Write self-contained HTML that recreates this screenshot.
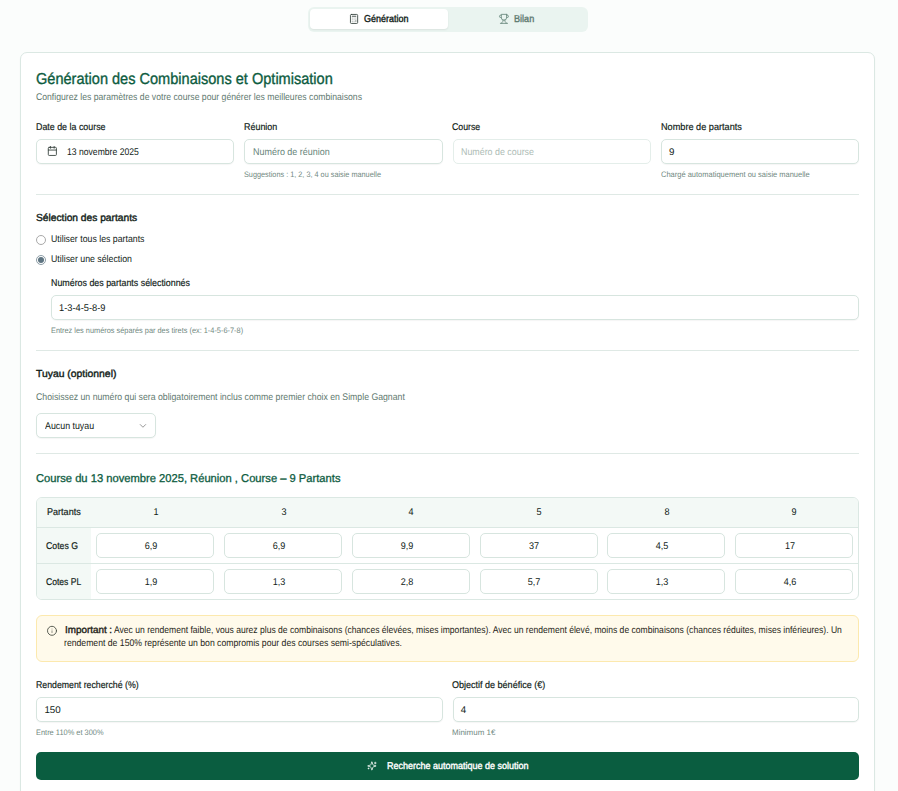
<!DOCTYPE html>
<html lang="fr">
<head>
<meta charset="utf-8">
<title>Génération</title>
<style>
*{box-sizing:border-box;margin:0;padding:0}
html,body{width:898px;height:791px;overflow:hidden;background:#fbfdfc;}
body{text-rendering:geometricPrecision;font-family:"Liberation Sans",sans-serif;color:#111c17;position:relative;font-size:9px;}
.abs{position:absolute}
.t{position:absolute;white-space:nowrap;line-height:1;transform-origin:0 50%;display:inline-block}
.lbl{-webkit-text-stroke:0.18px currentColor}
.med{-webkit-text-stroke:0.3px currentColor}
.sb{-webkit-text-stroke:0.38px currentColor}
.sbt{-webkit-text-stroke:0.35px currentColor}
.tabs{left:308px;top:7px;width:280px;height:25px;background:#eaf4f0;border-radius:6px}
.tab-on{left:310px;top:9px;width:138px;height:20px;background:#fff;border-radius:4px;box-shadow:0 1px 2px rgba(0,0,0,.07)}
.card{left:20px;top:52px;width:855px;height:760px;background:#fff;border:1px solid #dbe8e3;border-radius:7px;box-shadow:0 1px 2px rgba(0,0,0,.04)}
/*i*/.inp{position:absolute;height:25px;background:#fff;border:1px solid #d7e5df;border-radius:5px;box-shadow:0 1px 1px rgba(0,0,0,.04)}
.hr{position:absolute;left:36px;width:823px;height:1px;background:#dfe9e5}
.radio{position:absolute;width:10px;height:10px;border:1px solid #a9a9a9;border-radius:50%;background:#fff}
.radio.on{border-color:#8d9da6}
.radio.on::after{content:"";position:absolute;left:1px;top:1px;width:6px;height:6px;border-radius:50%;background:#5e7481}
.table{left:36px;top:497px;width:823px;height:103px;border:1px solid #dbe8e3;border-radius:6px;background:#fff;overflow:hidden}
.cell{position:absolute;height:25px;width:118px;background:#fff;border:1px solid #d7e5df;border-radius:5px}
.c{position:absolute;white-space:nowrap;line-height:1;transform:translateX(-50%) scaleX(.93);font-size:9.75px;color:#111c17}
.alert{left:36px;top:615px;width:823px;height:47px;background:#fffaeb;border:1px solid #fce9ae;border-radius:6px}
.btn{left:36px;top:752px;width:823px;height:28px;background:#0a5d40;border-radius:5px}
#tab1{left:364.30px;top:14.50px;font-size:10px;font-weight:400;color:#111c17;transform:scaleX(0.8973)}
#tab2{left:513.80px;top:14.50px;font-size:10px;font-weight:400;color:#5f7a70;transform:scaleX(0.9079)}
#title{left:36.10px;top:71.60px;font-size:15.8px;font-weight:400;color:#0d5c3f;transform:scaleX(0.9210)}
#sub{left:36.10px;top:92.62px;font-size:9.75px;font-weight:400;color:#5f7a70;transform:scaleX(0.8872)}
#l1{left:35.70px;top:122.62px;font-size:9.75px;font-weight:400;color:#111c17;transform:scaleX(0.9094)}
#l2{left:244.40px;top:122.62px;font-size:9.75px;font-weight:400;color:#111c17;transform:scaleX(0.9166)}
#l3{left:452.40px;top:122.62px;font-size:9.75px;font-weight:400;color:#111c17;transform:scaleX(0.8970)}
#l4{left:660.90px;top:122.62px;font-size:9.75px;font-weight:400;color:#111c17;transform:scaleX(0.9388)}
#date{left:66.90px;top:147.62px;font-size:9.75px;font-weight:400;color:#111c17;transform:scaleX(0.8830)}
#ph2{left:252.70px;top:147.62px;font-size:9.75px;font-weight:400;color:#68857a;transform:scaleX(0.9189)}
#ph3{left:460.50px;top:147.62px;font-size:9.75px;font-weight:400;color:#adbcb6;transform:scaleX(0.9100)}
#v4{left:669.00px;top:147.62px;font-size:9.75px;font-weight:400;color:#111c17;transform:scaleX(1.0000)}
#h2{left:244.40px;top:170.55px;font-size:7.9px;font-weight:400;color:#71897f;transform:scaleX(0.9240)}
#h4{left:660.90px;top:170.55px;font-size:7.9px;font-weight:400;color:#71897f;transform:scaleX(0.9496)}
#s1{left:35.70px;top:214.40px;font-size:10.2px;font-weight:400;color:#111c17;transform:scaleX(1.0029)}
#r1{left:50.70px;top:234.62px;font-size:9.75px;font-weight:400;color:#111c17;transform:scaleX(0.8986)}
#r2{left:50.70px;top:254.62px;font-size:9.75px;font-weight:400;color:#111c17;transform:scaleX(0.9003)}
#l5{left:51.20px;top:278.62px;font-size:9.75px;font-weight:400;color:#111c17;transform:scaleX(0.9094)}
#v5{left:59.40px;top:303.62px;font-size:9.75px;font-weight:400;color:#111c17;transform:scaleX(0.9512)}
#h5{left:51.20px;top:326.55px;font-size:7.9px;font-weight:400;color:#71897f;transform:scaleX(0.9339)}
#s2{left:35.70px;top:370.40px;font-size:10.2px;font-weight:400;color:#111c17;transform:scaleX(1.0189)}
#d2{left:35.70px;top:392.62px;font-size:9.75px;font-weight:400;color:#5f7a70;transform:scaleX(0.8931)}
#sel{left:44.50px;top:421.62px;font-size:9.75px;font-weight:400;color:#111c17;transform:scaleX(0.9056)}
#s3{left:35.70px;top:474.30px;font-size:11.4px;font-weight:400;color:#0d5c3f;transform:scaleX(0.9814)}
#th0{left:46.90px;top:507.62px;font-size:9.75px;font-weight:400;color:#111c17;transform:scaleX(0.9281)}
#th1{left:46.40px;top:541.62px;font-size:9.75px;font-weight:400;color:#111c17;transform:scaleX(0.8933)}
#th2{left:46.40px;top:577.62px;font-size:9.75px;font-weight:400;color:#111c17;transform:scaleX(0.8776)}
#a1b{left:64.70px;top:625.62px;font-size:9.75px;font-weight:400;color:#1f1f18;transform:scaleX(1.0105)}
#a1{left:113.60px;top:625.62px;font-size:9.75px;font-weight:400;color:#1f1f18;transform:scaleX(0.8782)}
#a2{left:64.30px;top:638.62px;font-size:9.75px;font-weight:400;color:#1f1f18;transform:scaleX(0.8882)}
#l6{left:35.70px;top:680.62px;font-size:9.75px;font-weight:400;color:#111c17;transform:scaleX(0.8973)}
#l7{left:452.30px;top:680.62px;font-size:9.75px;font-weight:400;color:#111c17;transform:scaleX(0.9245)}
#v6{left:44.40px;top:705.62px;font-size:9.75px;font-weight:400;color:#111c17;transform:scaleX(1.0000)}
#v7{left:460.70px;top:705.62px;font-size:9.75px;font-weight:400;color:#111c17;transform:scaleX(1.0000)}
#h6{left:35.70px;top:728.55px;font-size:7.9px;font-weight:400;color:#71897f;transform:scaleX(0.9415)}
#h7{left:452.30px;top:728.55px;font-size:7.9px;font-weight:400;color:#71897f;transform:scaleX(1.0097)}
#bt{left:387.20px;top:761.62px;font-size:9.75px;font-weight:400;color:#fff;transform:scaleX(0.9224)}
</style>
</head>
<body>

<!-- Tabs -->
<div class="abs tabs"></div>
<div class="abs tab-on"></div>

<!-- Card -->
<div class="abs card"></div>

<!-- Row 1 inputs -->
<div class="inp" style="left:36px;top:139px;width:198px"></div>
<div class="inp" style="left:244px;top:139px;width:199px"></div>
<div class="inp" style="left:453px;top:139px;width:198px;border-color:#e4eeea;box-shadow:none"></div>
<div class="inp" style="left:661px;top:139px;width:198px"></div>

<div class="hr" style="top:194px"></div>

<!-- Sélection -->
<div class="radio" style="left:36px;top:235px"></div>
<div class="radio on" style="left:36px;top:255px"></div>
<div class="inp" style="left:51px;top:295px;width:808px"></div>

<div class="hr" style="top:350px"></div>

<!-- Tuyau -->
<div class="inp" style="left:36px;top:413px;width:120px"></div>

<div class="hr" style="top:453px"></div>

<!-- Course table -->
<div class="abs table">
  <div class="abs" style="left:0;top:0;width:823px;height:30px;background:#f3f9f6"></div>
  <div class="abs" style="left:0;top:30px;width:54px;height:73px;background:#f3f9f6"></div>
  <div class="abs" style="left:0;top:29px;width:823px;height:1px;background:#dbe8e3"></div>
  <div class="abs" style="left:0;top:65px;width:823px;height:1px;background:#dbe8e3"></div>
</div>

<div class="cell" style="left:96px;top:533px"></div>
<div class="cell" style="left:224px;top:533px"></div>
<div class="cell" style="left:352px;top:533px"></div>
<div class="cell" style="left:480px;top:533px"></div>
<div class="cell" style="left:607px;top:533px"></div>
<div class="cell" style="left:735px;top:533px"></div>
<div class="cell" style="left:96px;top:569px"></div>
<div class="cell" style="left:224px;top:569px"></div>
<div class="cell" style="left:352px;top:569px"></div>
<div class="cell" style="left:480px;top:569px"></div>
<div class="cell" style="left:607px;top:569px"></div>
<div class="cell" style="left:735px;top:569px"></div>

<!-- Alert -->
<div class="abs alert"></div>

<!-- Bottom row -->
<div class="inp" style="left:36px;top:697px;width:407px"></div>
<div class="inp" style="left:453px;top:697px;width:406px"></div>

<!-- Button -->
<div class="abs btn"></div>

<svg class="abs" style="left:0;top:0" width="898" height="791" viewBox="0 0 898 791" fill="none" stroke-width="2" stroke-linecap="round" stroke-linejoin="round">
<g transform="translate(348.65 13.55) scale(0.45)" stroke="#3d4a45" opacity="1"><rect width="16" height="20" x="4" y="2" rx="2"/><line x1="8" x2="16" y1="6" y2="6"/><g stroke="#8d9792"><line x1="16" x2="16" y1="14" y2="18"/><path d="M16 10h.01"/><path d="M12 10h.01"/><path d="M8 10h.01"/><path d="M12 14h.01"/><path d="M8 14h.01"/><path d="M12 18h.01"/><path d="M8 18h.01"/></g></g>
<g transform="translate(498.55 13.45) scale(0.45)" stroke="#6d8c81" opacity="1"><path d="M6 9H4.500a2.500 2.500 0 0 1 0-5H6"/><path d="M18 9h1.500a2.500 2.500 0 0 0 0-5H18"/><path d="M4 22h16"/><path d="M10 14.660V17c0 .55-.47.98-.97 1.210C7.850 18.750 7 20.240 7 22"/><path d="M14 14.660V17c0 .55.47.98.97 1.210C16.150 18.750 17 20.240 17 22"/><path d="M18 2H6v7a6 6 0 0 0 12 0V2Z"/></g>
<g transform="translate(46.95 145.55) scale(0.45)" stroke="#3a4541" opacity="1"><path d="M8 2v4"/><path d="M16 2v4"/><rect width="18" height="18" x="3" y="4" rx="2"/><path d="M3 10h18"/></g>
<g transform="translate(137.55 420.5) scale(0.45)" stroke="#555" opacity="0.68"><path d="m6 9 6 6 6-6"/></g>
<g transform="translate(46.6 625.4) scale(0.45)" stroke="#4a4f45" opacity="1"><circle cx="12" cy="12" r="10"/><g stroke="#84847a"><path d="M12 16v-4"/><path d="M12 8h.01"/></g></g>
<g transform="translate(366.86 760.92) scale(0.42)" stroke="#e9f3ee" opacity="1"><path d="M9.937 15.500A2 2 0 0 0 8.500 14.063l-6.135-1.582a.5.5 0 0 1 0-.962L8.500 9.936A2 2 0 0 0 9.937 8.500l1.582-6.135a.5.5 0 0 1 .963 0L14.063 8.500A2 2 0 0 0 15.500 9.937l6.135 1.581a.5.5 0 0 1 0 .964L15.500 14.063a2 2 0 0 0-1.437 1.437l-1.582 6.135a.5.5 0 0 1-.963 0z"/><path d="M20 3v4"/><path d="M22 5h-4"/><path d="M4 17v2"/><path d="M5 18H3"/></g>
</svg>

<span class="t sb" id="tab1">Génération</span>
<span class="t sb" id="tab2">Bilan</span>
<span class="t sbt" id="title">Génération des Combinaisons et Optimisation</span>
<span class="t " id="sub">Configurez les paramètres de votre course pour générer les meilleures combinaisons</span>
<span class="t lbl" id="l1">Date de la course</span>
<span class="t lbl" id="l2">Réunion</span>
<span class="t lbl" id="l3">Course</span>
<span class="t lbl" id="l4">Nombre de partants</span>
<span class="t " id="date">13 novembre 2025</span>
<span class="t " id="ph2">Numéro de réunion</span>
<span class="t " id="ph3">Numéro de course</span>
<span class="t " id="v4">9</span>
<span class="t " id="h2">Suggestions : 1, 2, 3, 4 ou saisie manuelle</span>
<span class="t " id="h4">Chargé automatiquement ou saisie manuelle</span>
<span class="t sb" id="s1">Sélection des partants</span>
<span class="t " id="r1">Utiliser tous les partants</span>
<span class="t " id="r2">Utiliser une sélection</span>
<span class="t lbl" id="l5">Numéros des partants sélectionnés</span>
<span class="t " id="v5">1-3-4-5-8-9</span>
<span class="t " id="h5">Entrez les numéros séparés par des tirets (ex: 1-4-5-6-7-8)</span>
<span class="t sb" id="s2">Tuyau (optionnel)</span>
<span class="t " id="d2">Choisissez un numéro qui sera obligatoirement inclus comme premier choix en Simple Gagnant</span>
<span class="t " id="sel">Aucun tuyau</span>
<span class="t med" id="s3">Course du 13 novembre 2025, Réunion , Course – 9 Partants</span>
<span class="t lbl" id="th0">Partants</span>
<span class="t lbl" id="th1">Cotes G</span>
<span class="t lbl" id="th2">Cotes PL</span>
<span class="t sb" id="a1b">Important :</span>
<span class="t " id="a1">Avec un rendement faible, vous aurez plus de combinaisons (chances élevées, mises importantes). Avec un rendement élevé, moins de combinaisons (chances réduites, mises inférieures). Un</span>
<span class="t " id="a2">rendement de 150% représente un bon compromis pour des courses semi-spéculatives.</span>
<span class="t lbl" id="l6">Rendement recherché (%)</span>
<span class="t lbl" id="l7">Objectif de bénéfice (€)</span>
<span class="t " id="v6">150</span>
<span class="t " id="v7">4</span>
<span class="t " id="h6">Entre 110% et 300%</span>
<span class="t " id="h7">Minimum 1€</span>
<span class="t sb" id="bt">Recherche automatique de solution</span>
<span class="c" style="left:155.7px;top:507.62px">1</span>
<span class="c" style="left:283.5px;top:507.62px">3</span>
<span class="c" style="left:411.3px;top:507.62px">4</span>
<span class="c" style="left:538.8px;top:507.62px">5</span>
<span class="c" style="left:666.6px;top:507.62px">8</span>
<span class="c" style="left:794.4px;top:507.62px">9</span>
<span class="c" style="left:151.1px;top:541.62px">6,9</span>
<span class="c" style="left:278.9px;top:541.62px">6,9</span>
<span class="c" style="left:406.7px;top:541.62px">9,9</span>
<span class="c" style="left:534.2px;top:541.62px">37</span>
<span class="c" style="left:662.0px;top:541.62px">4,5</span>
<span class="c" style="left:789.8px;top:541.62px">17</span>
<span class="c" style="left:151.1px;top:577.62px">1,9</span>
<span class="c" style="left:278.9px;top:577.62px">1,3</span>
<span class="c" style="left:406.7px;top:577.62px">2,8</span>
<span class="c" style="left:534.2px;top:577.62px">5,7</span>
<span class="c" style="left:662.0px;top:577.62px">1,3</span>
<span class="c" style="left:789.8px;top:577.62px">4,6</span>

</body>
</html>
